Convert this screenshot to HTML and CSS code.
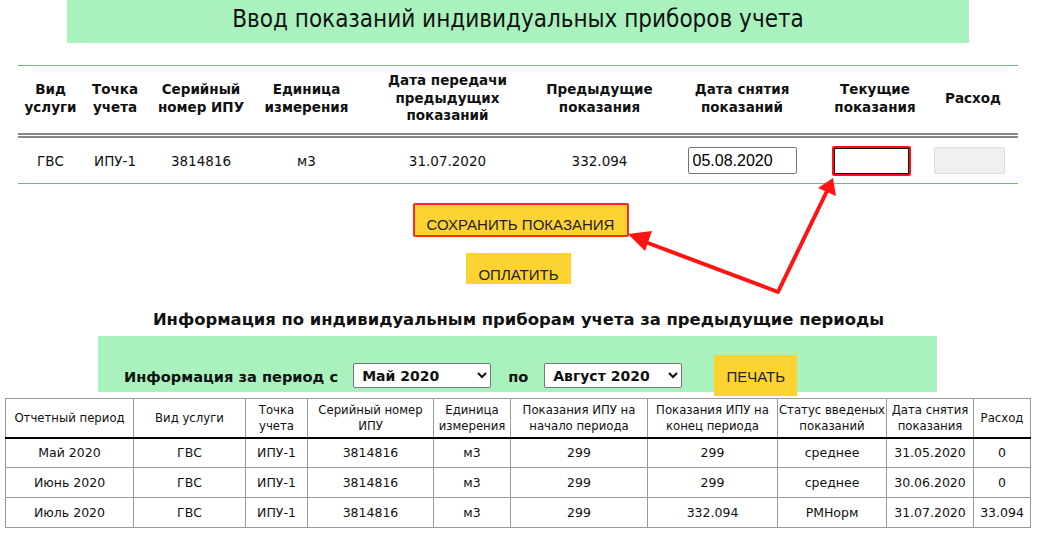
FILE: index.html
```html
<!DOCTYPE html>
<html lang="ru">
<head>
<meta charset="utf-8">
<title>Ввод показаний</title>
<link rel="stylesheet" href="styles.css">
</head>
<body>
<div class="page">
  <div class="title-box">Ввод показаний индивидуальных приборов учета</div>

  <table class="meter-table">
    <colgroup>
      <col style="width:65px"><col style="width:64px"><col style="width:108px"><col style="width:103px"><col style="width:179px"><col style="width:125px"><col style="width:160px"><col style="width:106px"><col style="width:90px">
    </colgroup>
    <thead>
      <tr>
        <th>Вид<br>услуги</th>
        <th>Точка<br>учета</th>
        <th>Серийный<br>номер ИПУ</th>
        <th>Единица<br>измерения</th>
        <th>Дата передачи<br>предыдущих<br>показаний</th>
        <th>Предыдущие<br>показания</th>
        <th>Дата снятия<br>показаний</th>
        <th>Текущие<br>показания</th>
        <th>Расход</th>
      </tr>
    </thead>
    <tbody>
      <tr>
        <td>ГВС</td>
        <td>ИПУ-1</td>
        <td>3814816</td>
        <td>м3</td>
        <td>31.07.2020</td>
        <td>332.094</td>
        <td><input class="date-input" type="text" value="05.08.2020"></td>
        <td><input class="current-input" type="text" value=""></td>
        <td><input class="usage-input" type="text" value="" disabled></td>
      </tr>
    </tbody>
  </table>

  <div class="actions">
    <button class="btn btn-save">СОХРАНИТЬ ПОКАЗАНИЯ</button>
    <button class="btn btn-pay">ОПЛАТИТЬ</button>
  </div>

  <h2 class="history-title">Информация по индивидуальным приборам учета за предыдущие периоды</h2>

  <div class="filter-bar">
    <span class="filter-label">Информация за период с</span>
    <select class="period-select"><option>Май 2020</option></select>
    <span class="filter-label filter-to">по</span>
    <select class="period-select"><option>Август 2020</option></select>
    <button class="btn btn-print">ПЕЧАТЬ</button>
  </div>

  <table class="history-table">
    <colgroup>
      <col style="width:128px"><col style="width:112px"><col style="width:62px"><col style="width:126px"><col style="width:77px"><col style="width:137px"><col style="width:130px"><col style="width:109px"><col style="width:87px"><col style="width:57px">
    </colgroup>
    <thead>
      <tr>
        <th>Отчетный период</th>
        <th>Вид услуги</th>
        <th>Точка учета</th>
        <th>Серийный номер ИПУ</th>
        <th>Единица измерения</th>
        <th>Показания ИПУ на начало периода</th>
        <th>Показания ИПУ на конец периода</th>
        <th>Статус введеных показаний</th>
        <th>Дата снятия показания</th>
        <th>Расход</th>
      </tr>
    </thead>
    <tbody>
      <tr><td>Май 2020</td><td>ГВС</td><td>ИПУ-1</td><td>3814816</td><td>м3</td><td>299</td><td>299</td><td>среднее</td><td>31.05.2020</td><td>0</td></tr>
      <tr><td>Июнь 2020</td><td>ГВС</td><td>ИПУ-1</td><td>3814816</td><td>м3</td><td>299</td><td>299</td><td>среднее</td><td>30.06.2020</td><td>0</td></tr>
      <tr><td>Июль 2020</td><td>ГВС</td><td>ИПУ-1</td><td>3814816</td><td>м3</td><td>299</td><td>332.094</td><td>РМНорм</td><td>31.07.2020</td><td>33.094</td></tr>
    </tbody>
  </table>

  <svg class="annotations" width="1045" height="534" viewBox="0 0 1045 534">
    <polyline points="648,243 778,292 827,191" fill="none" stroke="#ff1414" stroke-width="4" stroke-linejoin="round" stroke-linecap="round"/>
    <polygon points="833,178 836,196 818,188" fill="#ff1414"/>
    <polygon points="628,234 652,231 645,251" fill="#ff1414"/>
  </svg>
</div>
</body>
</html>
```

FILE: styles.css
```css
* { box-sizing: border-box; }
html, body { margin: 0; padding: 0; background: #fff; }
body { font-family: "DejaVu Sans", Verdana, sans-serif; color: #111; }

.page {
  position: relative;
  width: 1045px;
  height: 534px;
  overflow: hidden;
}

.title-box {
  margin: 0 76px 0 67px;
  height: 43px;
  background: #a9f2bd;
  font-family: "DejaVu Sans Condensed", "Liberation Sans Narrow", sans-serif;
  font-size: 24px;
  line-height: 38px;
  text-align: center;
  color: #111;
}

.meter-table {
  margin: 22px 0 0 18px;
  width: 1000px;
  border-collapse: collapse;
  table-layout: fixed;
  border-top: 1px solid #62bd86;
  border-bottom: 1px solid #62bd86;
}
.meter-table th {
  font-size: 13.5px;
  font-weight: bold;
  line-height: 17.5px;
  height: 70px;
  padding: 0 0 2px 0;
  vertical-align: middle;
  text-align: center;
  border-bottom: 5px double #888;
}
.meter-table td {
  font-size: 13.5px;
  height: 48px;
  padding: 0;
  text-align: center;
  vertical-align: middle;
}

.date-input {
  width: 109px;
  height: 27px;
  border: 1px solid #767676;
  border-radius: 2px;
  font-family: "Liberation Sans", Arial, sans-serif;
  font-size: 16px;
  padding: 0 4px;
  color: #000;
}
.current-input {
  width: 79px;
  height: 30px;
  border: 2px solid #ff1010;
  box-shadow: inset 0 0 0 1px #111;
  border-radius: 2px;
  margin-right: 7px;
}
.usage-input {
  width: 71px;
  height: 27px;
  background: #f0f0f0;
  border: 1px solid #dcdcdc;
  border-radius: 2px;
  margin-right: 8px;
}

.actions {
  display: flex;
  flex-direction: column;
  align-items: center;
  margin-top: 19px;
}
.btn {
  font-family: "Liberation Sans", Arial, sans-serif;
  font-size: 15px;
  color: #222;
  background: #fdd331;
  border: none;
  padding: 0;
  cursor: pointer;
}
.btn-save {
  width: 216px;
  height: 34px;
  border: 2px solid #ff2a1a;
  border-radius: 2px;
  padding-top: 9px;
  margin-left: -4px;
}
.btn-pay {
  width: 105px;
  height: 31px;
  margin-top: 16px;
  margin-left: -8px;
  padding-top: 11px;
}

.history-title {
  margin: 25px 0 0 0;
  font-size: 16.4px;
  font-weight: bold;
  line-height: 22px;
  text-align: center;
  padding-right: 8px;
  color: #111;
}

.filter-bar {
  margin: 5px 0 0 98px;
  width: 839px;
  height: 56px;
  background: #a9f2bd;
  display: flex;
  align-items: flex-end;
  padding-left: 26px;
  position: relative;
}
.filter-label {
  font-size: 14.6px;
  font-weight: bold;
  margin-bottom: 7px;
  margin-right: 15px;
}
.filter-to { margin-left: 17px; margin-right: 16px; }
.period-select {
  width: 138px;
  height: 25px;
  margin-bottom: 4px;
  font-family: "DejaVu Sans", Verdana, sans-serif;
  font-size: 14px;
  font-weight: bold;
  color: #111;
  background: #fff;
  border: 1px solid #767676;
  border-radius: 2px;
  padding-left: 4px;
}
.btn-print {
  width: 83px;
  height: 41px;
  margin-left: 32px;
  margin-bottom: -4px;
  padding-top: 2px;
  font-size: 15px;
}

.history-table {
  margin: 6px 0 0 5px;
  width: 1025px;
  border-collapse: collapse;
  table-layout: fixed;
  font-size: 12.5px;
}
.history-table th {
  font-family: "DejaVu Sans Condensed", "DejaVu Sans", sans-serif;
  font-size: 13px;
  font-weight: normal;
  line-height: 16px;
  height: 39px;
  padding: 0;
  border: 1px solid #999;
  border-bottom: 2px solid #000;
  text-align: center;
  vertical-align: middle;
}
.history-table td {
  height: 30px;
  padding: 0;
  border: 1px solid #999;
  text-align: center;
  vertical-align: middle;
}

.annotations {
  position: absolute;
  top: 0;
  left: 0;
  pointer-events: none;
}
```
